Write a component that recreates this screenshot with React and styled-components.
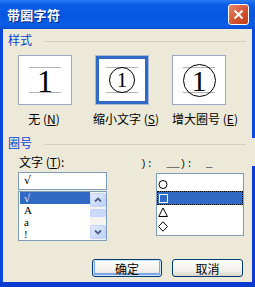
import React from "react";
import styled, { createGlobalStyle } from "styled-components";

const GlobalStyle = createGlobalStyle`
  html, body {
    margin: 0;
    padding: 0;
    background: #fff;
  }
  body {
    font-family: "Noto Sans CJK SC", "Liberation Sans", sans-serif;
    font-size: 12px;
    color: #000;
  }
`;

const Frame = styled.div`
  width: 255px;
  height: 287px;
  display: flex;
  flex-direction: column;
  background: linear-gradient(
    to bottom,
    #0a48dc 0,
    #0a48dc 138px,
    #ece9d8 138px,
    #ece9d8 166px,
    #0b3ccf 166px
  );
`;

const TitleBar = styled.div`
  height: 29px;
  flex: none;
  display: flex;
  align-items: center;
  justify-content: space-between;
  padding: 0 6px 0 7px;
  box-sizing: border-box;
  background: linear-gradient(
    to bottom,
    #2a7bf0 0,
    #0a5ee8 15%,
    #0656e0 50%,
    #0a5de6 85%,
    #0a4fd8 100%
  );
`;

const Title = styled.span`
  color: #fff;
  font-weight: bold;
  font-size: 13px;
  letter-spacing: 0.3px;
  text-shadow: 1px 1px 0 #0a2a8c;
`;

const CloseButton = styled.div`
  width: 21px;
  height: 21px;
  box-sizing: border-box;
  border: 1px solid #fff;
  border-radius: 3px;
  background: linear-gradient(to bottom right, #e9896a, #d4532f 55%, #c23d1c);
  display: flex;
  align-items: center;
  justify-content: center;
`;

const Body = styled.div`
  flex: 1;
  margin: 0 3px 5px 0;
  border-left: 3px solid #0a48dc;
  background: #ece9d8;
  padding: 4px 6px 0 5px;
  display: flex;
  flex-direction: column;
`;

const GroupHeader = styled.div`
  display: flex;
  align-items: flex-start;
  height: 14px;
  line-height: 14px;
  margin-top: ${(p) => p.$top || 0}px;
`;

const GroupLabel = styled.span`
  color: #0046d5;
  font-size: 12px;
  margin-right: 12px;
`;

const GroupLine = styled.div`
  flex: 1;
  height: 1px;
  margin-top: 8px;
  background: #d0d0bf;
`;

const OptionRow = styled.div`
  display: flex;
  gap: 23px;
  margin: 8px 0 0 10px;
`;

const Option = styled.div`
  width: 54px;
  display: flex;
  flex-direction: column;
  align-items: center;
`;

const SampleBox = styled.div`
  width: 54px;
  height: 50px;
  box-sizing: border-box;
  background: #fff;
  border: 1px solid ${(p) => (p.$active ? "#a9b8d0" : "#9aa9bf")};
  box-shadow: ${(p) => (p.$active ? "inset 0 0 0 3px #3169c6" : "none")};
  display: flex;
  justify-content: center;
  padding-top: 11px;
`;

const Guides = styled.div`
  width: 32px;
  height: 24px;
  border-top: 1px solid #b4b4b4;
  border-bottom: 1px solid #b4b4b4;
  display: flex;
  align-items: center;
  justify-content: center;
`;

const Digit = styled.span`
  font-family: "Liberation Serif", "DejaVu Serif", serif;
  font-size: ${(p) => p.$size}px;
  line-height: 1;
  margin-top: ${(p) => p.$shift || 0}px;
`;

const Ring = styled.div`
  width: ${(p) => p.$size}px;
  height: ${(p) => p.$size}px;
  flex: none;
  box-sizing: border-box;
  border: 1px solid #000;
  border-radius: 50%;
  display: flex;
  align-items: center;
  justify-content: center;
`;

const OptionLabel = styled.span`
  margin-top: 7px;
  white-space: nowrap;
  line-height: 14px;
  font-size: 12px;
  margin-left: ${(p) => p.$shift || 0}px;
`;

const Lower = styled.div`
  display: flex;
  margin: 5px 0 0 10px;
`;

const LeftCol = styled.div`
  width: 89px;
  display: flex;
  flex-direction: column;
`;

const RightCol = styled.div`
  width: 104px;
  margin-left: 33px;
  display: flex;
  flex-direction: column;
`;

const FieldLabel = styled.span`
  line-height: 14px;
  height: 14px;
  font-size: 12px;
  margin-left: 1px;
`;

const OddLabel = styled.span`
  font-family: "Liberation Mono", monospace;
  font-size: 11px;
  line-height: 14px;
  height: 14px;
  margin-top: 2px;
  color: #222;
  white-space: pre;
`;

const TextInput = styled.div`
  margin-top: 3px;
  height: 18px;
  box-sizing: border-box;
  border: 1px solid #7f9db9;
  background: #fff;
  padding-left: 5px;
  line-height: 16px;
  font-family: "DejaVu Sans", sans-serif;
  font-size: 11px;
`;

const ListBox = styled.div`
  box-sizing: border-box;
  border: 1px solid #7f9db9;
  background: #fff;
  display: flex;
`;

const LeftList = styled(ListBox)`
  margin-top: 1px;
  height: 50px;
`;

const Items = styled.div`
  flex: 1;
  padding-left: 1px;
`;

const Item = styled.div`
  height: 12px;
  line-height: 12px;
  overflow: hidden;
  padding-left: 4px;
  font-family: "Liberation Serif", serif;
  font-size: 11px;
  background: ${(p) => (p.$selected ? "#316ac5" : "transparent")};
  color: ${(p) => (p.$selected ? "#fff" : "#000")};
`;

const ScrollBar = styled.div`
  width: 16px;
  display: flex;
  flex-direction: column;
  padding: 1px 0;
  background: #f4f3ee;
`;

const ScrollButton = styled.div`
  height: 14px;
  box-sizing: border-box;
  border: 1px solid #c3d3fd;
  border-radius: 2px;
  background: linear-gradient(to bottom right, #e3ebfe, #bccffb);
  display: flex;
  align-items: center;
  justify-content: center;
  margin-top: ${(p) => (p.$down ? "auto" : "0")};
`;

const Thumb = styled.div`
  height: 8px;
  margin-top: 2px;
  box-sizing: border-box;
  border: 1px solid #c3d3fd;
  border-radius: 2px;
  background: #c9d8fc;
`;

const RightList = styled(ListBox)`
  margin: 2px 0 0 16px;
  height: 63px;
  width: 88px;
  flex-direction: column;
  padding-top: 3px;
`;

const SymbolRow = styled.div`
  height: 14px;
  display: flex;
  align-items: center;
  padding-left: 1px;
  box-sizing: border-box;
  background: ${(p) => (p.$selected ? "#316ac5" : "transparent")};
  outline: ${(p) => (p.$selected ? "1px dotted #000" : "none")};
  outline-offset: -1px;
`;

const Footer = styled.div`
  display: flex;
  justify-content: flex-end;
  gap: 10px;
  margin-top: 18px;
  padding-right: 3px;
`;

const Button = styled.div`
  width: ${(p) => p.$w}px;
  height: 18px;
  box-sizing: border-box;
  border: 1px solid #003c74;
  border-radius: 3px;
  background: linear-gradient(to bottom, #ffffff, #f0efe9 70%, #d9d4c8);
  box-shadow: ${(p) =>
    p.$default ? "inset 0 0 0 1px #cee7ff, inset 0 -1px 0 2px #7fa7e8" : "none"};
  display: flex;
  align-items: center;
  justify-content: center;
  font-size: 12px;
`;

const Chevron = ({ down }) => (
  <svg width="8" height="6" viewBox="0 0 8 6">
    <path
      d={down ? "M1 1.5 L4 4.5 L7 1.5" : "M1 4.5 L4 1.5 L7 4.5"}
      fill="none"
      stroke="#4d6185"
      strokeWidth="1.8"
    />
  </svg>
);

const Shape = ({ kind, light }) => {
  const stroke = light ? "#fff" : "#000";
  return (
    <svg width="11" height="11" viewBox="0 0 11 11">
      {kind === "circle" && <circle cx="5" cy="5.5" r="4" fill="none" stroke={stroke} />}
      {kind === "square" && <rect x="1.5" y="1.5" width="8" height="8" fill="#316ac5" stroke={stroke} />}
      {kind === "triangle" && <path d="M5 1 L9.5 9.5 L0.8 9.5 Z" fill="none" stroke={stroke} />}
      {kind === "diamond" && <path d="M5 0.8 L9.5 5.5 L5 10.2 L0.5 5.5 Z" fill="none" stroke={stroke} />}
    </svg>
  );
};

const symbols = ["circle", "square", "triangle", "diamond"];
const chars = ["√", "A", "a", "!"];

export default function App() {
  return (
    <>
      <GlobalStyle />
      <Frame>
        <TitleBar>
          <Title>带圈字符</Title>
          <CloseButton>
            <svg width="11" height="11" viewBox="0 0 11 11">
              <path d="M1.5 1.5 L9.5 9.5 M9.5 1.5 L1.5 9.5" stroke="#fff" strokeWidth="2" />
            </svg>
          </CloseButton>
        </TitleBar>
        <Body>
          <GroupHeader>
            <GroupLabel>样式</GroupLabel>
            <GroupLine />
          </GroupHeader>
          <OptionRow>
            <Option>
              <SampleBox>
                <Guides>
                  <Digit $size={32} $shift={1}>1</Digit>
                </Guides>
              </SampleBox>
              <OptionLabel $shift={-2}>
                无 (<u>N</u>)
              </OptionLabel>
            </Option>
            <Option>
              <SampleBox $active>
                <Guides>
                  <Ring $size={26}>
                    <Digit $size={21} $shift={1}>1</Digit>
                  </Ring>
                </Guides>
              </SampleBox>
              <OptionLabel $shift={8}>
                缩小文字 (<u>S</u>)
              </OptionLabel>
            </Option>
            <Option>
              <SampleBox>
                <Guides>
                  <Ring $size={33}>
                    <Digit $size={30} $shift={2}>1</Digit>
                  </Ring>
                </Guides>
              </SampleBox>
              <OptionLabel $shift={12}>
                增大圈号 (<u>E</u>)
              </OptionLabel>
            </Option>
          </OptionRow>
          <GroupHeader $top={10}>
            <GroupLabel>圈号</GroupLabel>
            <GroupLine />
          </GroupHeader>
          <Lower>
            <LeftCol>
              <FieldLabel>
                文字 (<u>T</u>):
              </FieldLabel>
              <TextInput>√</TextInput>
              <LeftList>
                <Items>
                  {chars.map((c, i) => (
                    <Item key={c} $selected={i === 0}>
                      {c}
                    </Item>
                  ))}
                </Items>
                <ScrollBar>
                  <ScrollButton>
                    <Chevron />
                  </ScrollButton>
                  <Thumb />
                  <ScrollButton $down>
                    <Chevron down />
                  </ScrollButton>
                </ScrollBar>
              </LeftList>
            </LeftCol>
            <RightCol>
              <OddLabel>{"):  __):  _"}</OddLabel>
              <RightList>
                {symbols.map((s, i) => (
                  <SymbolRow key={s} $selected={i === 1}>
                    <Shape kind={s} light={i === 1} />
                  </SymbolRow>
                ))}
              </RightList>
            </RightCol>
          </Lower>
          <Footer>
            <Button $w={70} $default>
              确定
            </Button>
            <Button $w={71}>取消</Button>
          </Footer>
        </Body>
      </Frame>
    </>
  );
}
